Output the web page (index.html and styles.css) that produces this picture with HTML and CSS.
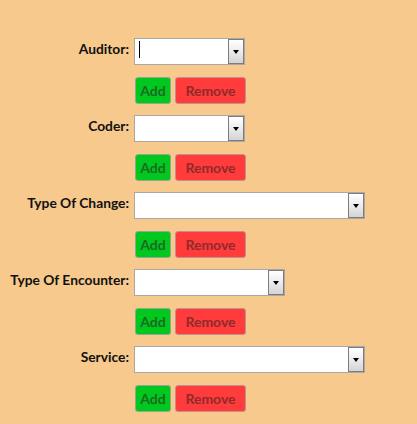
FILE: index.html
```html
<!DOCTYPE html>
<html>
<head>
<meta charset="utf-8">
<link rel="stylesheet" href="styles.css">
</head>
<body>
<div class="form">
  <div class="label">Auditor:</div>
  <div class="select w-auditor"><span class="caret"></span><span class="arrow"><span class="tri"></span></span></div>
  <div></div>
  <div class="buttons"><button class="btn add">Add</button><button class="btn remove">Remove</button></div>

  <div class="label">Coder:</div>
  <div class="select w-coder"><span class="arrow"><span class="tri"></span></span></div>
  <div></div>
  <div class="buttons"><button class="btn add">Add</button><button class="btn remove">Remove</button></div>

  <div class="label">Type Of Change:</div>
  <div class="select w-change"><span class="arrow"><span class="tri"></span></span></div>
  <div></div>
  <div class="buttons"><button class="btn add">Add</button><button class="btn remove">Remove</button></div>

  <div class="label">Type Of Encounter:</div>
  <div class="select w-encounter"><span class="arrow"><span class="tri"></span></span></div>
  <div></div>
  <div class="buttons"><button class="btn add">Add</button><button class="btn remove">Remove</button></div>

  <div class="label">Service:</div>
  <div class="select w-service"><span class="arrow"><span class="tri"></span></span></div>
  <div></div>
  <div class="buttons"><button class="btn add">Add</button><button class="btn remove">Remove</button></div>
</div>
</body>
</html>
```
FILE: styles.css
```css
html, body {
  margin: 0;
  padding: 0;
  background: #f7c98c;
  height: 100%;
}
body {
  font-family: Lato, "Liberation Sans", sans-serif;
}
.form {
  display: grid;
  grid-template-columns: 129px auto;
  grid-auto-rows: 27px;
  column-gap: 5px;
  row-gap: 11.5px;
  padding-top: 38px;
  justify-content: start;
}
.label {
  text-align: right;
  font-weight: bold;
  font-size: 13.8px;
  color: #111;
  padding-top: 2px;
  line-height: 17px;
  white-space: nowrap;
}
.select {
  position: relative;
  box-sizing: border-box;
  height: 27px;
  background: #fff;
  border: 1px solid #a8a8a8;
  justify-self: start;
}
.w-auditor { width: 111px; }
.w-coder { width: 111px; }
.w-change { width: 231px; }
.w-encounter { width: 151px; }
.w-service { width: 231px; }
.caret {
  position: absolute;
  left: 4px;
  top: 2px;
  width: 1px;
  height: 17px;
  background: #000;
}
.arrow {
  position: absolute;
  right: 0;
  top: 0;
  bottom: 0;
  width: 16px;
  box-sizing: border-box;
  border: 1px solid #7c7c7c;
  background: linear-gradient(#ffffff, #f0f0f0 40%, #d4d4d4);
  display: flex;
  align-items: center;
  justify-content: center;
}
.tri {
  width: 0;
  height: 0;
  border-left: 3.5px solid transparent;
  border-right: 3.5px solid transparent;
  border-top: 4px solid #000;
  margin-top: 1px;
}
.buttons {
  display: flex;
  gap: 4px;
  padding-left: 1px;
}
.btn {
  box-sizing: border-box;
  height: 27px;
  border: 1px solid #9a9a9a;
  border-radius: 3px;
  font-family: Lato, "Liberation Sans", sans-serif;
  font-weight: bold;
  font-size: 14px;
  padding: 0;
  margin: 0;
}
.add {
  width: 36px;
  background: #00c81e;
  color: #1c6b22;
  border-color: #8fa88f;
}
.remove {
  width: 71px;
  background: #ff3b3b;
  color: #8f2b2b;
  border-color: #c29090;
}
```
